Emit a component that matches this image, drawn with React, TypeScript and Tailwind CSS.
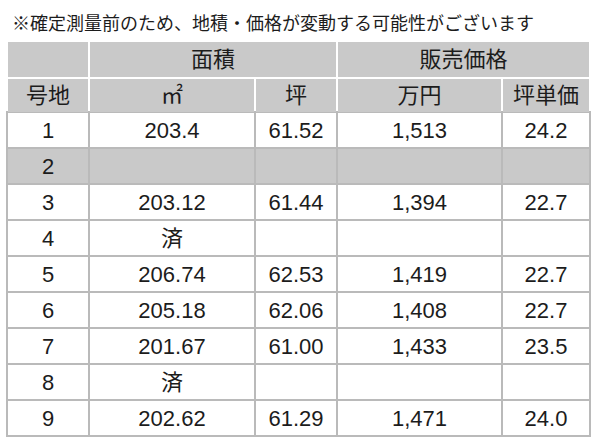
import React from "react";

const COLS = "grid grid-cols-[80px_164px_80px_163px_86px] gap-x-[2px]";

type Row = { no: string; m2: string; tsubo: string; price: string; unit: string; gray?: boolean };

const rows: Row[] = [
  { no: "1", m2: "203.4", tsubo: "61.52", price: "1,513", unit: "24.2" },
  { no: "2", m2: "", tsubo: "", price: "", unit: "", gray: true },
  { no: "3", m2: "203.12", tsubo: "61.44", price: "1,394", unit: "22.7" },
  { no: "4", m2: "済", tsubo: "", price: "", unit: "" },
  { no: "5", m2: "206.74", tsubo: "62.53", price: "1,419", unit: "22.7" },
  { no: "6", m2: "205.18", tsubo: "62.06", price: "1,408", unit: "22.7" },
  { no: "7", m2: "201.67", tsubo: "61.00", price: "1,433", unit: "23.5" },
  { no: "8", m2: "済", tsubo: "", price: "", unit: "" },
  { no: "9", m2: "202.62", tsubo: "61.29", price: "1,471", unit: "24.0" },
];

export default function App() {
  return (
    <div
      className="w-[600px] h-[444px] bg-white text-[#1c1c1c] overflow-hidden"
      style={{ fontFamily: '"Liberation Sans", "Noto Sans CJK JP", sans-serif' }}
    >
      <div className="h-[42px] pl-[12px] pt-[13px] text-[18px] leading-[22px] whitespace-nowrap">
        ※確定測量前のため、地積・価格が変動する可能性がございます
      </div>
      <div className="ml-[6px] w-[585px]">
        <div className="px-[2px] bg-white">
          <div className={`${COLS} h-[35px] text-[22px]`}>
            <div className="bg-[#c9c9c9]" />
            <div className="col-span-2 bg-[#c9c9c9] flex items-center justify-center">面積</div>
            <div className="col-span-2 bg-[#c9c9c9] flex items-center justify-center">販売価格</div>
          </div>
          <div className={`${COLS} h-[32px] mt-[2px] text-[22px]`}>
            <div className="bg-[#c9c9c9] flex items-center justify-center">号地</div>
            <div className="bg-[#c9c9c9] flex items-center justify-center">㎡</div>
            <div className="bg-[#c9c9c9] flex items-center justify-center">坪</div>
            <div className="bg-[#c9c9c9] flex items-center justify-center">万円</div>
            <div className="bg-[#c9c9c9] flex items-center justify-center">坪単価</div>
          </div>
        </div>
        <div className="bg-[#bababa] p-[2px] flex flex-col gap-y-[2px]">
          {rows.map((r) => {
            const bg = r.gray ? "bg-[#c9c9c9]" : "bg-white";
            const cell = `${bg} flex items-center justify-center`;
            return (
              <div key={r.no} className={`${COLS} h-[34px] text-[22px]`}>
                <div className={cell}>{r.no}</div>
                <div className={cell}>{r.m2}</div>
                <div className={cell}>{r.tsubo}</div>
                <div className={cell}>{r.price}</div>
                <div className={cell}>{r.unit}</div>
              </div>
            );
          })}
        </div>
      </div>
    </div>
  );
}
